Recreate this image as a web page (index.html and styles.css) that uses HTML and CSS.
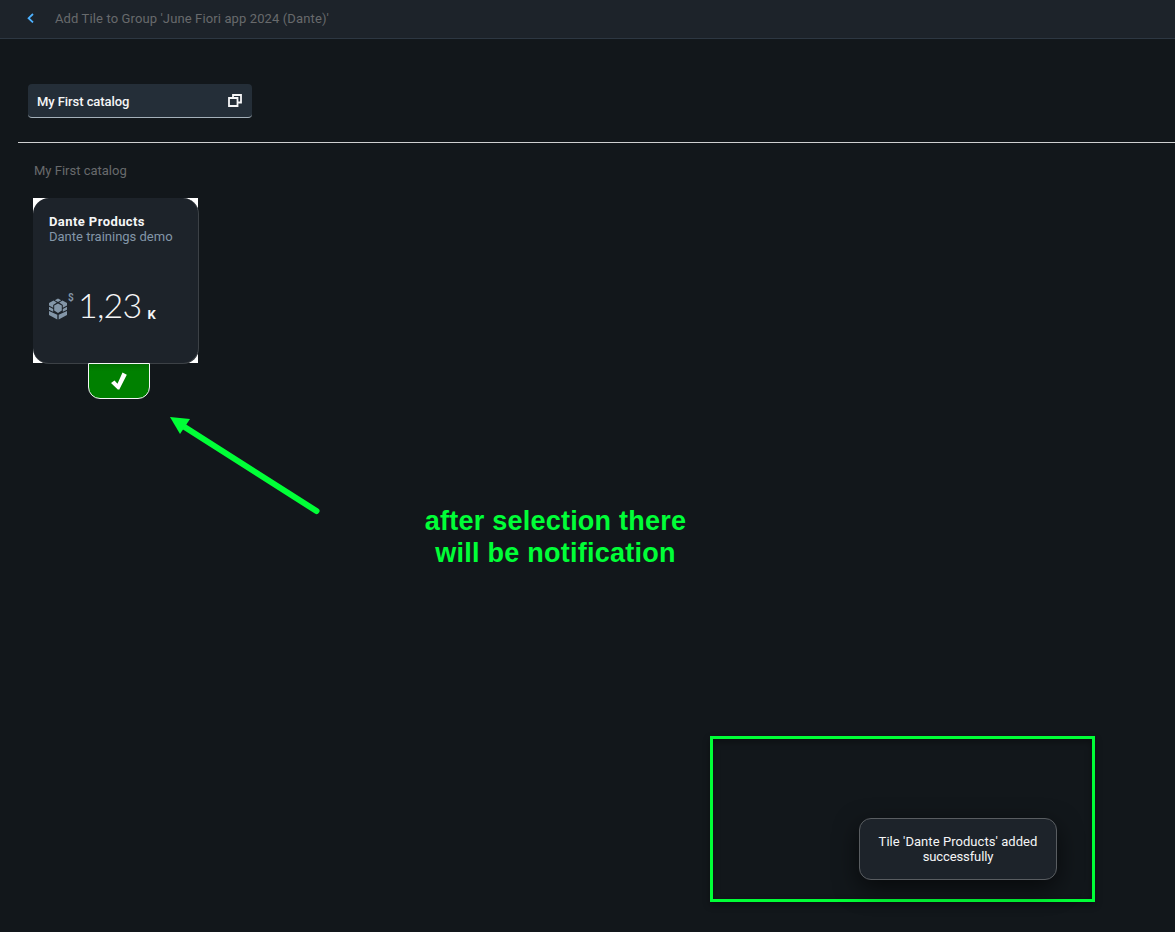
FILE: index.html
```html
<!DOCTYPE html>
<html lang="en">
<head>
<meta charset="utf-8">
<title>Add Tile to Group</title>
<link rel="stylesheet" href="styles.css">
</head>
<body>
<header class="bar">
  <svg class="back" width="8" height="10" viewBox="0 0 8 10"><path d="M7 1L2.600 5.200l4.400 4.200" /></svg>
  <span class="bar-title">Add Tile to Group 'June Fiori app 2024 (Dante)'</span>
</header>
<main class="page">
  <div class="select">
    <span class="select-value">My First catalog</span>
    <svg class="copy" width="14" height="13" viewBox="0 0 14 13"><path d="M5 3.500V1h8v7.500h-3M1 4h8.500v8H1z"/></svg>
  </div>
  <hr class="rule">
  <h2 class="catalog"><span>My First catalog</span></h2>
  <div class="item">
    <div class="corners">
      <section class="tile">
        <h3 class="tile-title">Dante Products</h3>
        <p class="tile-sub">Dante trainings demo</p>
        <div class="kpi">
          <svg class="product" width="27" height="28" viewBox="0 0 27 28">
            <path d="M10 5.500l3.200 1.800L10 9 6.800 7.300zM5.500 7.500l3.300 2.100-3.600 2.500v2.600L1 12.600v-2.600zM14.500 7.500l-3.300 2.100 3.600 2.500v2.600l4.200-2.100v-2.600zM10 10.400l3.800 2.200v5L10 19.900l-3.800-2.300v-5zM1 13.800l4.200 2.100v2.800L1 16.800zM19 13.800l-4.200 2.100v2.800l4.200-1.900zM1 18l4.400 2 3.900 1.800v4.700L1 22zM19 18l-4.400 2-3.900 1.800v4.700L19 22z"/>
            <text x="20" y="8">$</text>
          </svg>
          <span class="number">1,23</span>
          <span class="scale">K</span>
        </div>
      </section>
    </div>
    <div class="added">
      <svg width="16" height="18" viewBox="0 0 16 18"><path d="M0 11l3.500-2.500 3 3.200L11.500.500 15.800 2.800 8.300 17.500H6.800z"/></svg>
    </div>
  </div>
</main>
<svg class="arrow" width="160" height="110" viewBox="0 0 160 110"><path class="shaft" d="M18 16L151.500 101"/><path class="head" d="M5 7l20 2-10 15z"/></svg>
<p class="note"><span class="note-first">after selection there</span><span class="note-second">will be notification</span></p>
<div class="frame"></div>
<div class="toast"><span class="toast-first">Tile 'Dante Products' added</span><span class="toast-second">successfully</span></div>
</body>
</html>
```
FILE: styles.css
```css
* { box-sizing: border-box; }
body { margin: 0; height: 932px; position: relative; overflow: hidden; background: #12171b; color: #f5f6f7; font: 13px/15px Roboto, "Liberation Sans", sans-serif; }
h2, h3, p { margin: 0; font-weight: 400; }
.bar { display: flex; align-items: center; height: 39px; padding: 0 0 2px 26px; background: #1d232a; border-bottom: 1px solid #2d3742; }
.back { fill: none; stroke: #4db1ff; stroke-width: 1.8; }
.bar-title { margin-left: 21px; color: #686a6c; letter-spacing: .12px; }
.page { padding: 45px 0 0 18px; }
.select { display: flex; justify-content: space-between; align-items: center; width: 224px; height: 34px; margin-left: 10px; padding: 0 10px 0 9px; background: #242e38; border-bottom: 1px solid #a4b0ba; border-radius: 4px; }
.select-value { padding-top: 2px; font-weight: 500; letter-spacing: -.07px; }
.copy { fill: none; stroke: #f5f6f7; stroke-width: 1.8; }
.rule { height: 1px; margin: 24px 0 0; border: 0; background: #cfd0d1; }
.catalog { margin: 20px 0 0 16px; color: #686a6c; font-size: 13px; }
.item { display: flex; flex-direction: column; align-items: center; width: 166px; margin: 20px 0 0 15px; }
.corners { align-self: flex-start; width: 165px; height: 165px; background: #fff; }
.tile { width: 166px; height: 166px; padding: 16px 0 0 16px; background: #1d232a; border: solid #3c4146; border-width: 0 1px 1px 0; border-radius: 16px; }
.tile-title { font-size: 13px; font-weight: 700; letter-spacing: .42px; }
.tile-sub { color: #8396a8; }
.kpi { display: flex; align-items: flex-end; height: 42px; margin-top: 40px; }
.product { flex: none; margin: 0 0 5px -1px; fill: #8396a8; }
.product text { font: 700 10px Roboto, sans-serif; }
.number { margin-left: 3px; font: 300 34px/42px Lato, "Open Sans", sans-serif; letter-spacing: -.8px; }
.scale { margin: 0 0 4px 6px; font: 700 13px/15px Roboto, sans-serif; }
.added { position: relative; display: flex; justify-content: center; align-items: center; width: 62px; height: 36px; margin-left: 6px; background: linear-gradient(#006d00, #008000 7px); border: 1px solid #f5f6f7; border-radius: 0 0 12px 12px; }
.added svg { fill: #fff; }
.arrow { position: absolute; left: 165px; top: 410px; fill: #00ff37; }
.shaft { stroke: #00ff37; stroke-width: 6; stroke-linecap: round; }
.note { position: absolute; left: 405px; top: 505px; width: 301px; display: flex; flex-direction: column; align-items: center; color: #00ff37; font: 700 27px/32px "Liberation Sans", Arial, sans-serif; letter-spacing: .24px; }
.frame { position: absolute; left: 710px; top: 736px; width: 385px; height: 166px; border: 3px solid #00ff37; box-shadow: 0 3px 7px #0005, inset 0 3px 7px #0005; }
.toast { position: absolute; left: 859px; top: 818px; width: 198px; height: 62px; padding-top: 15px; display: flex; flex-direction: column; align-items: center; background: #1d232a; border: 1px solid #595d61; border-radius: 12px; box-shadow: 0 8px 24px #0009; }
.toast-first { letter-spacing: .06px; }
.toast-second { letter-spacing: -.12px; }
```
